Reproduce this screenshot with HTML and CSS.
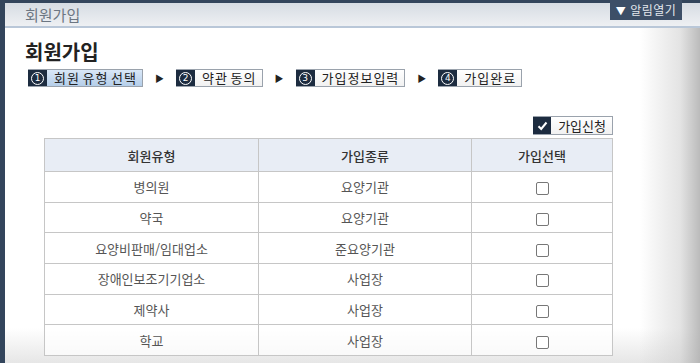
FILE: index.html
```html
<!DOCTYPE html>
<html lang="ko">
<head>
<meta charset="utf-8">
<link rel="stylesheet" href="styles.css">
</head>
<body>
<div class="frame">
  <div class="topbar">회원가입</div>
  <div class="notice"><span class="tri">▼</span>알림열기</div>
  <div class="content">
    <h1 class="title">회원가입</h1>
    <div class="steps">
      <div class="step active"><span class="num"><span class="circ">1</span></span><span class="label">회원 유형 선택</span></div>
      <span class="arrow">▶</span>
      <div class="step"><span class="num"><span class="circ">2</span></span><span class="label">약관 동의</span></div>
      <span class="arrow">▶</span>
      <div class="step"><span class="num"><span class="circ">3</span></span><span class="label">가입정보입력</span></div>
      <span class="arrow">▶</span>
      <div class="step"><span class="num"><span class="circ">4</span></span><span class="label">가입완료</span></div>
    </div>
    <div class="panel">
      <div class="actions">
        <button class="apply"><span class="chk"><svg width="11" height="10" viewBox="0 0 11 10"><path d="M1.5 5.2 L4.2 8 L9.5 1.5" fill="none" stroke="#fff" stroke-width="2"/></svg></span><span class="apply-label">가입신청</span></button>
      </div>
      <table class="grid">
        <colgroup><col class="c1"><col class="c2"><col class="c3"></colgroup>
        <thead>
          <tr><th>회원유형</th><th>가입종류</th><th>가입선택</th></tr>
        </thead>
        <tbody>
          <tr><td>병의원</td><td>요양기관</td><td><span class="box"></span></td></tr>
          <tr><td>약국</td><td>요양기관</td><td><span class="box"></span></td></tr>
          <tr><td>요양비판매/임대업소</td><td>준요양기관</td><td><span class="box"></span></td></tr>
          <tr><td>장애인보조기기업소</td><td>사업장</td><td><span class="box"></span></td></tr>
          <tr><td>제약사</td><td>사업장</td><td><span class="box"></span></td></tr>
          <tr><td>학교</td><td>사업장</td><td><span class="box"></span></td></tr>
        </tbody>
      </table>
    </div>
  </div>
</div>
</body>
</html>
```

FILE: styles.css
```css
html, body {
  margin: 0;
  padding: 0;
}
body {
  width: 700px;
  height: 363px;
  overflow: hidden;
  background: #33455c;
  font-family: "Noto Sans CJK KR", "Noto Sans", sans-serif;
}
.frame {
  position: relative;
  margin: 3px 0 0 5px;
  height: 360px;
  background:
    linear-gradient(to right, rgba(255,255,255,0) 0, rgba(255,255,255,0) 635px, rgba(205,205,205,0.55) 675px, rgba(175,175,175,0.85) 695px),
    linear-gradient(to bottom, #ffffff 0, #ffffff 325px, #e6e6e6 360px);
}
.topbar {
  height: 23px;
  line-height: 23px;
  padding-left: 20px;
  font-size: 15px;
  color: #6c7682;
  background: linear-gradient(#d6dce3, #eef0f3);
  border-bottom: 2px solid #b9c7d8;
}
.notice {
  position: absolute;
  top: -3px;
  right: 18px;
  width: 72px;
  height: 20px;
  background: #3d4f67;
  color: #e3e7ec;
  font-size: 12px;
  line-height: 20px;
  text-align: center;
  letter-spacing: 0.5px;
}
.notice .tri {
  font-size: 10px;
  margin-right: 4px;
  color: #fff;
}
.content {
  padding: 11px 0 0 20px;
}
.title {
  margin: 0;
  font-size: 20px;
  font-weight: bold;
  color: #222;
  line-height: 26px;
}
.steps {
  display: flex;
  align-items: center;
  margin: 4px 0 0 3px;
}
.step {
  display: flex;
  height: 18px;
  border: 1px solid #9aa2ac;
  border-left: 0;
  box-sizing: border-box;
}
.step .num {
  width: 19px;
  background: #1d2c40;
  display: flex;
  align-items: center;
  justify-content: center;
}
.circ {
  width: 11px;
  height: 11px;
  border: 1px solid #fff;
  border-radius: 50%;
  color: #fff;
  font-family: "DejaVu Sans", sans-serif;
  font-size: 9px;
  line-height: 11px;
  text-align: center;
}
.step .label {
  padding: 0 5px 0 7px;
  font-size: 13px;
  line-height: 16px;
  letter-spacing: 1px;
  word-spacing: -2px;
  color: #222;
  background: linear-gradient(#ffffff, #f1f1f1);
}
.step.active .label {
  background: linear-gradient(#d9e7f7, #b5cee9);
}
.arrow {
  font-size: 9px;
  color: #222;
  margin: 0 12px 0 12px;
}
.panel {
  width: 569px;
  margin: 29px 0 0 19px;
}
.actions {
  display: flex;
  justify-content: flex-end;
  height: 19px;
}
.apply {
  display: flex;
  padding: 0;
  margin: 0;
  border: 1px solid #9aa2ac;
  border-left: 0;
  background: none;
  height: 19px;
  font-family: inherit;
}
.apply .chk {
  width: 18px;
  background: #1d2c40;
  display: flex;
  align-items: center;
  justify-content: center;
}
.apply .apply-label {
  padding: 0 6px 0 7px;
  font-size: 13px;
  line-height: 17px;
  color: #222;
  background: linear-gradient(#ffffff, #f1f1f1);
}
.grid {
  width: 569px;
  margin-top: 3px;
  border-collapse: collapse;
  table-layout: fixed;
}
.grid .c1 { width: 214px; }
.grid .c2 { width: 213px; }
.grid th, .grid td {
  border: 1px solid #c6c6c6;
  text-align: center;
  padding: 0;
}
.grid th {
  height: 32px;
  background: #e8edf5;
  font-size: 13px;
  font-weight: 500;
  color: #333;
}
.grid td {
  height: 29.7px;
  font-size: 13px;
  color: #555;
  background: rgba(255,255,255,0.7);
}
.box {
  display: inline-block;
  width: 11px;
  height: 11px;
  border: 1px solid #777;
  border-radius: 2px;
  vertical-align: middle;
  background: #fff;
}
```
